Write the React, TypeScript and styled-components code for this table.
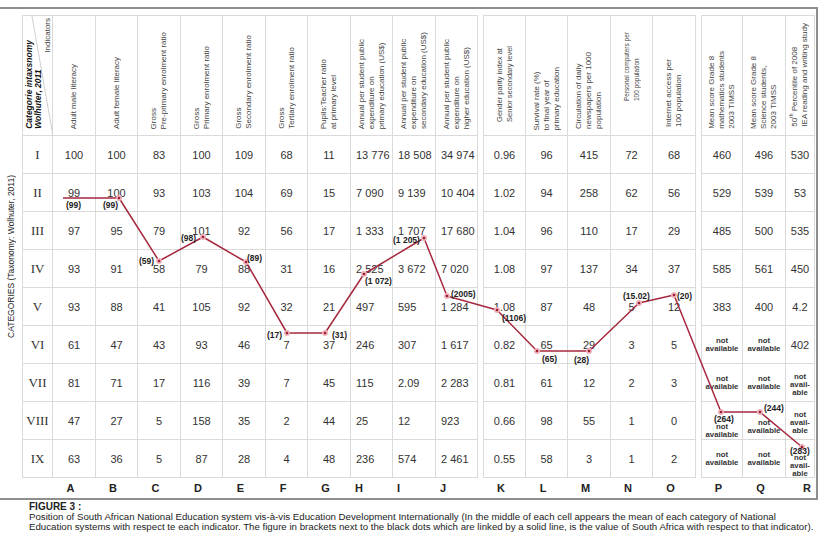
import React from 'react';
import styled, { createGlobalStyle } from 'styled-components';

type Align = 'center' | 'left';

interface Column {
  letter: string;
  width: number;
  head: React.ReactNode[];
  align?: Align;
  headPad?: number;
  headSize?: number;
}

const firstCols: Column[] = [
  { letter: 'A', width: 43, head: ['Adult male literacy'] },
  { letter: 'B', width: 42, head: ['Adult female literacy'] },
  { letter: 'C', width: 43, head: ['Gross', 'Pre-primary enrolment ratio'] },
  { letter: 'D', width: 42, head: ['Gross', 'Primary enrolment ratio'] },
  { letter: 'E', width: 43, head: ['Gross', 'Secondary enrolment ratio'] },
  { letter: 'F', width: 42, head: ['Gross', 'Tertiary enrolment ratio'] },
  { letter: 'G', width: 43, head: ['Pupils:Teacher ratio', 'at primary level'] },
  { letter: 'H', width: 42, align: 'left', head: ['Annual per student public', 'expenditure on', 'primary education (US$)'] },
  { letter: 'I', width: 43, align: 'left', head: ['Annual per student public', 'expenditure on', 'secondary education (US$)'] },
  { letter: 'J', width: 42, align: 'left', head: ['Annual per student public', 'expenditure on', 'higher  education (US$)'] },
];

const secondCols: Column[] = [
  { letter: 'K', width: 43, headPad: 13, headSize: 7.5, head: ['Gender parity index at', 'Senior secondary level'] },
  { letter: 'L', width: 42, headPad: 4, head: ['Survival rate (%)', 'to final year of', 'primary education'] },
  { letter: 'M', width: 43, head: ['Circulation of daily', 'newspapers per 1000', 'population'] },
  { letter: 'N', width: 42, headPad: 34, headSize: 6.5, head: ['Personal computers per', '100 population'] },
  { letter: 'O', width: 43, headPad: 8, head: ['Internet access per', '100 population'] },
];

const thirdCols: Column[] = [
  { letter: 'P', width: 42, head: ['Mean score Grade 8', 'mathematics students', '2003 TIMSS'] },
  { letter: 'Q', width: 43, head: ['Mean score Grade 8', 'Science students,', '2003 TIMSS'] },
  {
    letter: 'R',
    width: 29,
    headPad: 8,
    head: [<>50<sup>th</sup> Percentile of 2008</>, 'IEA reading and writing study'],
  },
];

// NA = "not available", NA3 = hyphenated over three lines
const rows: { roman: string; values: string[] }[] = [
  { roman: 'I', values: ['100', '100', '83', '100', '109', '68', '11', '13 776', '18 508', '34 974', '0.96', '96', '415', '72', '68', '460', '496', '530'] },
  { roman: 'II', values: ['99', '100', '93', '103', '104', '69', '15', '7 090', '9 139', '10 404', '1.02', '94', '258', '62', '56', '529', '539', '53'] },
  { roman: 'III', values: ['97', '95', '79', '101', '92', '56', '17', '1 333', '1 707', '17 680', '1.04', '96', '110', '17', '29', '485', '500', '535'] },
  { roman: 'IV', values: ['93', '91', '58', '79', '88', '31', '16', '2 525', '3 672', '7 020', '1.08', '97', '137', '34', '37', '585', '561', '450'] },
  { roman: 'V', values: ['93', '88', '41', '105', '92', '32', '21', '497', '595', '1 284', '1.08', '87', '48', '5', '12', '383', '400', '4.2'] },
  { roman: 'VI', values: ['61', '47', '43', '93', '46', '7', '37', '246', '307', '1 617', '0.82', '65', '29', '3', '5', 'NA', 'NA', '402'] },
  { roman: 'VII', values: ['81', '71', '17', '116', '39', '7', '45', '115', '2.09', '2 283', '0.81', '61', '12', '2', '3', 'NA', 'NA', 'NA3'] },
  { roman: 'VIII', values: ['47', '27', '5', '158', '35', '2', '44', '25', '12', '923', '0.66', '98', '55', '1', '0', 'NA', 'NA', 'NA3'] },
  { roman: 'IX', values: ['63', '36', '5', '87', '28', '4', '48', '236', '574', '2 461', '0.55', '58', '3', '1', '2', 'NA', 'NA', 'NA3'] },
];

// cells whose text sits lower, under the South Africa label
const shifts: Record<string, number> = { 'VIII-P': 10, 'VIII-Q': 6, 'VIII-R': 2, 'IX-R': 7, 'VII-R': 2 };

const linePoints = [
  [63, 198], [119, 198], [159, 261], [203, 237], [246, 262], [287, 333], [325, 333],
  [364, 274], [424, 238], [447, 296], [497, 310], [537, 351], [589, 351], [639, 303],
  [674, 295], [721, 412], [760, 412], [802, 447],
];

const saLabels = [
  { t: '(99)', x: 66, y: 208 },
  { t: '(99)', x: 103, y: 208 },
  { t: '(59)', x: 139, y: 264 },
  { t: '(98)', x: 181, y: 241 },
  { t: '(89)', x: 247, y: 261 },
  { t: '(17)', x: 267, y: 338 },
  { t: '(31)', x: 332, y: 338 },
  { t: '(1 072)', x: 365, y: 284 },
  { t: '(1 205)', x: 393, y: 243 },
  { t: '(2005)', x: 451, y: 297 },
  { t: '(1106)', x: 502, y: 321 },
  { t: '(65)', x: 542, y: 362 },
  { t: '(28)', x: 574, y: 363 },
  { t: '(15.02)', x: 623, y: 299 },
  { t: '(20)', x: 677, y: 299 },
  { t: '(264)', x: 714, y: 422 },
  { t: '(244)', x: 764, y: 411 },
  { t: '(283)', x: 790, y: 454 },
];

const GlobalStyle = createGlobalStyle`
  html, body {
    margin: 0;
    padding: 0;
    background: #ffffff;
  }
  body {
    font-family: 'Liberation Sans', Arial, sans-serif;
    color: #333;
  }
`;

const NotAvailable = ({ hyphen }: { hyphen?: boolean }) =>
  hyphen ? (
    <NaText>not<br />avail-<br />able</NaText>
  ) : (
    <NaText>not<br />available</NaText>
  );

const SubTable = ({ columns, withRoman, offset }: { columns: Column[]; withRoman?: boolean; offset: number }) => {
  const widths = (withRoman ? [31] : []).concat(columns.map((c) => c.width));
  const tracks = widths.map((w, i) => `${i === 0 ? w - 1 : w}px`).join(' ');

  return (
    <TableBlock>
      <Grid $tracks={tracks}>
        {withRoman && (
          <CornerCell>
            <Diagonal width="30" height="120">
              <line x1="9" y1="0" x2="30" y2="120" stroke="#cfcfcf" strokeWidth="1" />
            </Diagonal>
            <CornerCategory>Categorie intaxsnomy<br />Wolhuter, 2011</CornerCategory>
            <CornerIndicators>Indicators</CornerIndicators>
          </CornerCell>
        )}
        {columns.map((c) => (
          <HeadCell key={c.letter} $pad={c.headPad ?? 6}>
            <HeadText $size={c.headSize ?? 8}>
              {c.head.map((line, i) => (
                <React.Fragment key={i}>
                  {i > 0 && <br />}
                  {line}
                </React.Fragment>
              ))}
            </HeadText>
          </HeadCell>
        ))}
        {rows.map((r) => (
          <React.Fragment key={r.roman}>
            {withRoman && <RomanCell>{r.roman}</RomanCell>}
            {columns.map((c, i) => {
              const v = r.values[offset + i];
              const shift = shifts[`${r.roman}-${c.letter}`] ?? 0;
              return (
                <Cell key={c.letter} $align={c.align ?? 'center'} $shift={shift}>
                  {v === 'NA' || v === 'NA3' ? <NotAvailable hyphen={v === 'NA3'} /> : v}
                </Cell>
              );
            })}
          </React.Fragment>
        ))}
      </Grid>
      <LetterRow $tracks={tracks}>
        {withRoman && <span />}
        {columns.map((c) => (
          <Letter key={c.letter} $align={c.align ?? 'center'} $right={c.letter === 'R'}>
            {c.letter}
          </Letter>
        ))}
      </LetterRow>
    </TableBlock>
  );
};

const SouthAfricaLine = () => (
  <Overlay width="822" height="538" viewBox="0 0 822 538">
    <polyline
      points={linePoints.map((p) => p.join(',')).join(' ')}
      fill="none"
      stroke="#a6283e"
      strokeWidth="1.5"
      strokeLinejoin="round"
    />
    {linePoints.slice(1).map(([x, y], i) => (
      <g key={i}>
        <circle cx={x} cy={y} r="3" fill="#eeb3bb" />
        <circle cx={x} cy={y} r="1.3" fill="#9d1f35" />
      </g>
    ))}
    {saLabels.map((l, i) => (
      <text key={i} x={l.x} y={l.y} fontSize="8.5" fontWeight="bold" fill="#222" fontFamily="'Liberation Sans', Arial, sans-serif">
        {l.t}
      </text>
    ))}
  </Overlay>
);

const App = () => (
  <Page>
    <GlobalStyle />
    <Figure>
      <AxisColumn>
        <AxisLabel>CATEGORIES (Taxonomy: Wolhuter, 2011)</AxisLabel>
      </AxisColumn>
      <Tables>
        <SubTable columns={firstCols} withRoman offset={0} />
        <SubTable columns={secondCols} offset={10} />
        <SubTable columns={thirdCols} offset={15} />
      </Tables>
    </Figure>
    <Caption>
      <CaptionTitle>FIGURE 3 :</CaptionTitle>
      <CaptionLine>
        Position of South African National Education system vis-à-vis Education Development Internationally (In the middle of each cell appears the mean of each category of National
      </CaptionLine>
      <CaptionLine>
        Education systems with respect te each indicator. The figure in brackets next to the black dots which are linked by a solid line, is the value of South Africa with respect to that indicator).
      </CaptionLine>
    </Caption>
    <SouthAfricaLine />
  </Page>
);

const Page = styled.div`
  position: relative;
  width: 822px;
  height: 538px;
  padding-top: 7px;
  box-sizing: border-box;
  overflow: hidden;
`;

const Figure = styled.div`
  display: flex;
  width: 818px;
  box-sizing: border-box;
  padding-top: 6px;
  border-top: 2px solid #8e8e8e;
  border-right: 2px solid #8e8e8e;
  border-bottom: 2px solid #8e8e8e;
`;

const AxisColumn = styled.div`
  width: 22px;
  flex: none;
  display: flex;
  flex-direction: column;
  align-items: center;
  padding-top: 160px;
  box-sizing: border-box;
`;

const AxisLabel = styled.div`
  writing-mode: vertical-rl;
  transform: rotate(180deg);
  font-size: 8.5px;
  color: #222;
  white-space: nowrap;
`;

const Tables = styled.div`
  display: flex;
  gap: 5px;
`;

const TableBlock = styled.div`
  display: flex;
  flex-direction: column;
`;

const Grid = styled.div<{ $tracks: string }>`
  display: grid;
  grid-template-columns: ${(p) => p.$tracks};
  grid-template-rows: 120px repeat(9, 38px);
  border-top: 1px solid #dadada;
  border-left: 1px solid #dadada;

  & > div {
    box-sizing: border-box;
    border-right: 1px solid #dadada;
    border-bottom: 1px solid #dadada;
  }
`;

const CornerCell = styled.div`
  position: relative;
  display: flex;
  justify-content: space-between;
  padding: 2px 0 6px 2px;
`;

const Diagonal = styled.svg`
  position: absolute;
  left: 0;
  top: 0;
`;

const CornerCategory = styled.div`
  align-self: flex-end;
  writing-mode: vertical-rl;
  transform: rotate(180deg);
  font-size: 8.5px;
  line-height: 9px;
  font-weight: bold;
  font-style: italic;
  color: #111;
  white-space: nowrap;
`;

const CornerIndicators = styled.div`
  align-self: flex-start;
  writing-mode: vertical-rl;
  transform: rotate(180deg);
  font-size: 8px;
  color: #444;
  white-space: nowrap;
`;

const HeadCell = styled.div<{ $pad: number }>`
  display: flex;
  align-items: flex-end;
  justify-content: center;
  padding-bottom: ${(p) => p.$pad}px;
  overflow: hidden;
`;

const HeadText = styled.div<{ $size: number }>`
  writing-mode: vertical-rl;
  transform: rotate(180deg);
  font-size: ${(p) => p.$size}px;
  line-height: 10px;
  color: #444;
  white-space: nowrap;

  sup {
    font-size: 5px;
    line-height: 0;
  }
`;

const RomanCell = styled.div`
  display: flex;
  align-items: center;
  justify-content: center;
  font-family: 'Liberation Serif', 'Times New Roman', serif;
  font-size: 13px;
  color: #333;
`;

const Cell = styled.div<{ $align: Align; $shift: number }>`
  display: flex;
  align-items: center;
  justify-content: ${(p) => (p.$align === 'left' ? 'flex-start' : 'center')};
  padding-left: ${(p) => (p.$align === 'left' ? '5px' : '0')};
  padding-top: ${(p) => p.$shift * 2}px;
  font-size: 11px;
  color: #333;
  white-space: nowrap;
`;

const NaText = styled.span`
  font-size: 7.8px;
  line-height: 8px;
  font-weight: bold;
  color: #333;
  text-align: center;
`;

const LetterRow = styled.div<{ $tracks: string }>`
  display: grid;
  grid-template-columns: ${(p) => p.$tracks};
  height: 20px;
  padding-left: 1px;
`;

const Letter = styled.div<{ $align: Align; $right?: boolean }>`
  display: flex;
  align-items: center;
  justify-content: ${(p) => (p.$right ? 'flex-end' : p.$align === 'left' ? 'flex-start' : 'center')};
  padding: ${(p) => (p.$right ? '0 4px 0 0' : p.$align === 'left' ? '0 0 0 4px' : '0 8px 0 0')};
  font-size: 11px;
  font-weight: bold;
  color: #222;
`;

const Caption = styled.div`
  padding: 2px 0 0 29px;
  color: #222;
`;

const CaptionTitle = styled.div`
  font-size: 10px;
  line-height: 10px;
  font-weight: bold;
`;

const CaptionLine = styled.div`
  font-size: 9.7px;
  line-height: 10px;
  white-space: nowrap;
`;

const Overlay = styled.svg`
  position: absolute;
  left: 0;
  top: 0;
  pointer-events: none;
`;

export default App;
